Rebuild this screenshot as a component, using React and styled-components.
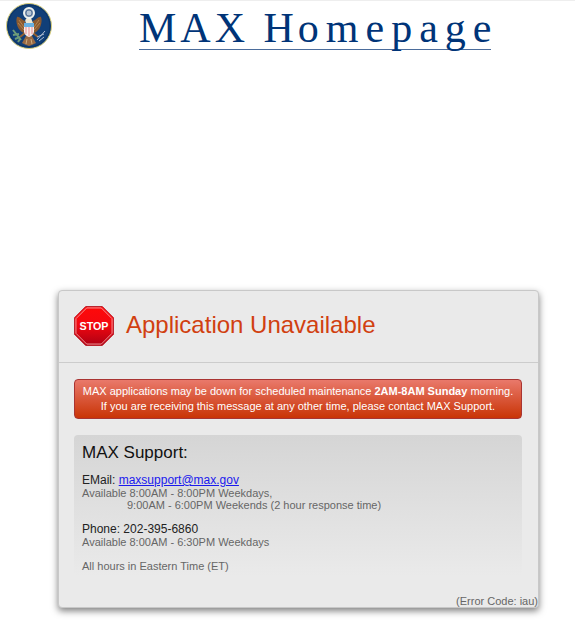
import React from "react";
import styled, { createGlobalStyle } from "styled-components";

const GlobalStyle = createGlobalStyle`
  * { box-sizing: border-box; }
  body {
    margin: 0;
    background: #fff;
    font-family: "Liberation Sans", Arial, sans-serif;
    font-size: 11px;
    line-height: 12px;
    color: #666;
  }
`;

const Page = styled.div`
  border-top: 1px solid #eee;
`;

const Header = styled.header`
  display: flex;
  align-items: flex-start;
  padding: 2px 6px;
  margin-bottom: 238px;
`;

const Seal = styled.svg`
  flex: none;
  width: 46px;
  height: 46px;
`;

const SiteTitle = styled.a`
  display: flex;
  align-items: baseline;
  margin-left: 87px;
  padding-top: 4px;
  border-bottom: 1px solid #4b6c9b;
  color: #003478;
  font-family: "Liberation Serif", "Times New Roman", serif;
  font-size: 42px;
  line-height: 42px;
  text-decoration: none;
  white-space: pre;
`;

const Capitals = styled.span`
  letter-spacing: 4px;
`;

const SmallLetters = styled.span`
  margin-right: -7px;
  letter-spacing: 7px;
`;

const Card = styled.main`
  margin: 0 36px 24px 58px;
  border: 1px solid #c8c8c8;
  border-radius: 4px;
  background: #eaeaea;
  box-shadow: 0 3px 7px rgba(0, 0, 0, 0.5);
`;

const CardHeader = styled.div`
  display: flex;
  align-items: center;
  gap: 12px;
  padding: 15px 15px 16px;
  border-bottom: 1px solid #ccc;
`;

const StopIcon = styled.svg`
  flex: none;
  width: 40px;
  height: 40px;
`;

const Heading = styled.h1`
  margin: 0;
  padding-bottom: 2px;
  color: #d14010;
  font-size: 24px;
  font-weight: 400;
  line-height: 30px;
`;

const CardBody = styled.div`
  padding: 16px 16px 0 15px;
`;

const Alert = styled.p`
  margin: 0 0 16px;
  padding: 4px;
  border: 1px solid #a93432;
  border-radius: 4px;
  background: linear-gradient(#e9796b, #c93406);
  color: #fff;
  line-height: 15px;
  text-align: center;
`;

const Support = styled.section`
  padding: 8px 8px 4px;
  border-radius: 4px;
  background: linear-gradient(#d5d5d5, #eaeaea);
`;

const SupportTitle = styled.h2`
  margin: 0 0 11px;
  color: #111;
  font-size: 17px;
  font-weight: 400;
  line-height: 20px;
`;

const Contact = styled.div`
  margin-bottom: 12px;
`;

const ContactLine = styled.div`
  color: #222;
  font-size: 12px;
  line-height: 13px;

  a { color: #1a1aee; }
`;

const Hours = styled.div`
  padding-left: ${(p) => (p.$indented ? "45px" : "0")};
`;

const ErrorCode = styled.div`
  padding-top: 19px;
  text-align: right;
`;

function EagleSeal() {
  return (
    <Seal viewBox="0 0 46 46" role="img" aria-label="Great Seal">
      <circle cx="23" cy="23" r="22.5" fill="#113f78" stroke="#d8cd79" />
      <circle cx="23" cy="23" r="21" fill="none" stroke="#0c3464" strokeWidth="1" />
      <path d="M19 18C16 17 13 13 11 14C9 19 12 28 18 30L20 25ZM27 18C30 17 33 13 35 14C37 19 34 28 28 30L26 25Z" fill="#8a5a30" />
      <path d="M13 17L18 24M12 20L18 27M33 17L28 24M34 20L28 27" stroke="#b58450" strokeWidth="1" />
      <path d="M19 30L14 34M27 30L32 34" stroke="#94602f" strokeWidth="2" />
      <path d="M20 33L16 40L20 42L23 43L26 42L30 40L26 33Z" fill="#9a6b43" />
      <path d="M21 36L20 41M25 36L26 41" stroke="#d0ad80" strokeWidth="1" />
      <path d="M21 15Q18 17 20 20H27L25 15Z" fill="#eee7d3" />
      <circle cx="23" cy="10" r="5" fill="#7a91ad" stroke="#edf1ee" strokeWidth="2" />
      <circle cx="23" cy="10" r="3" fill="#b7c6d4" stroke="#58749b" strokeWidth="1" />
      <path d="M18 20H28V29Q27 33 23 34Q19 33 18 29Z" fill="#f8eceb" />
      <path d="M18 20H28V24H18Z" fill="#69b1e2" />
      <path d="M20 24V31M23 24V33M26 24V31" stroke="#ee8d8d" strokeWidth="1" />
      <path d="M7 27L15 37M7 32L13 31M9 36L14 34M12 39L14 36" stroke="#6d9b79" strokeWidth="2" />
      <path d="M31 37L39 28M31 34L38 31M33 38L38 34" stroke="#aebbd0" strokeWidth="1" />
    </Seal>
  );
}

function StopSign() {
  return (
    <StopIcon viewBox="0 0 41 41" role="img" aria-label="Stop">
      <defs>
        <linearGradient id="stop-red" x1="0" y1="0" x2="0" y2="1">
          <stop offset="0" stopColor="#ff0909" />
          <stop offset="0.45" stopColor="#f40810" />
          <stop offset="1" stopColor="#ad0014" />
        </linearGradient>
      </defs>
      <path d="M12 0.5H29L40.5 12V29L29 40.5H12L0.5 29V12Z" fill="url(#stop-red)" stroke="#b9202b" />
      <path d="M13 2H28L39 13V28L28 39H13L2 28V13Z" fill="none" stroke="#f29999" />
      <text x="20.5" y="25" textAnchor="middle" fill="#fff" fontFamily="Liberation Sans, Arial, sans-serif" fontSize="11" fontWeight="700">STOP</text>
    </StopIcon>
  );
}

export default function App() {
  return (
    <Page>
      <GlobalStyle />
      <Header>
        <EagleSeal />
        <SiteTitle href="#">
          <Capitals>MAX H</Capitals>
          <SmallLetters>omepage</SmallLetters>
        </SiteTitle>
      </Header>
      <Card>
        <CardHeader>
          <StopSign />
          <Heading>Application Unavailable</Heading>
        </CardHeader>
        <CardBody>
          <Alert>
            MAX applications may be down for scheduled maintenance <strong>2AM-8AM Sunday</strong> morning.
            <br />
            If you are receiving this message at any other time, please contact MAX Support.
          </Alert>
          <Support>
            <SupportTitle>MAX Support:</SupportTitle>
            <Contact>
              <ContactLine>
                EMail: <a href="mailto:maxsupport@max.gov">maxsupport@max.gov</a>
              </ContactLine>
              <Hours>Available 8:00AM - 8:00PM Weekdays,</Hours>
              <Hours $indented>9:00AM - 6:00PM Weekends (2 hour response time)</Hours>
            </Contact>
            <Contact>
              <ContactLine>Phone: 202-395-6860</ContactLine>
              <Hours>Available 8:00AM - 6:30PM Weekdays</Hours>
            </Contact>
            <Hours>All hours in Eastern Time (ET)</Hours>
          </Support>
        </CardBody>
        <ErrorCode>(Error Code: iau)</ErrorCode>
      </Card>
    </Page>
  );
}
